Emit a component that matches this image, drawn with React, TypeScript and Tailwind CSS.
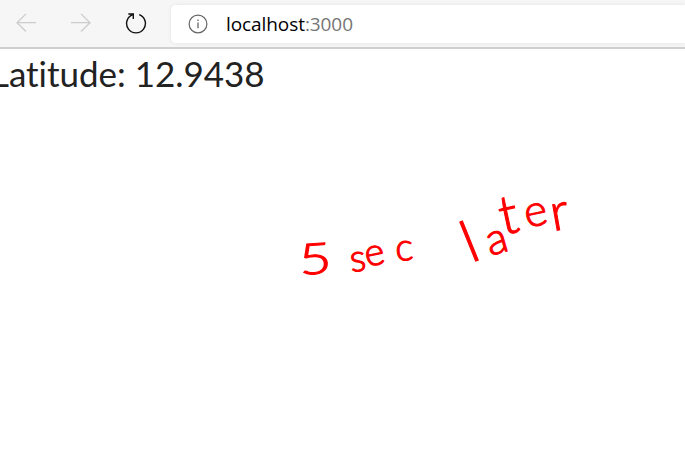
const ink = "fill-[#ff0000] stroke-[#ff0000] font-['Lato',sans-serif] font-light";

function Toolbar() {
  return (
    <header className="flex h-[49px] items-start border-b-2 border-[#cfcfcf] bg-[#f6f6f6]">
      <div className="flex w-[171px] shrink-0 items-start pt-[13px] pl-4">
        <svg className="h-5 w-5 shrink-0" viewBox="0 0 20 20" fill="none" stroke="#cccccc" strokeWidth="1.3">
          <path d="M20 9.7H1M10 .9L1 9.7L10 18.5" />
        </svg>
        <svg className="ml-[35px] h-5 w-5 shrink-0" viewBox="0 0 20 20" fill="none" stroke="#cccccc" strokeWidth="1.3">
          <path d="M0 9.7H19M10 .9L19 9.7L10 18.5" />
        </svg>
        <svg className="ml-[34px] h-[22px] w-[22px] shrink-0" viewBox="0 0 22 22" fill="none" stroke="#111111" strokeWidth="1.4">
          <path d="M14.2 1.6A9.4 9.4 0 1 1 7.8 1.6M3.3 1H8.3V6" />
        </svg>
      </div>
      <div className="mt-[5px] flex h-[38px] flex-1 items-center rounded-l-[5px] bg-white pl-[17px] shadow-[0_0_4px_rgba(0,0,0,0.08)]">
        <svg className="h-5 w-5 shrink-0" viewBox="0 0 20 20" fill="none" stroke="#666666">
          <circle cx="10" cy="10" r="8.9" strokeWidth="1.2" />
          <path d="M10 8.5V14.2M10 5.5V7" strokeWidth="1.3" />
        </svg>
        <span className="ml-[18px] font-['Open_Sans',sans-serif] text-[19px] leading-[26px] tracking-[-0.08px] text-black">
          localhost<span className="text-[#767676]">:3000</span>
        </span>
      </div>
    </header>
  );
}

function Annotation() {
  return (
    <svg className="block h-[353px] w-full" viewBox="0 100 685 353" strokeWidth="1.1">
      <text className={ink} fontSize="43" transform="translate(300 275) rotate(-4) scale(1.3 1)">
        5
      </text>
      <text className={ink} fontSize="38">
        <tspan x="351" y="272" rotate="-6">s</tspan>
        <tspan x="367" y="267" rotate="-12">e</tspan>
        <tspan x="396" y="261" rotate="-4">c</tspan>
      </text>
      <text className={ink} fontSize="44">
        <tspan x="471" y="263" rotate="-22" fontSize="58">l</tspan>
        <tspan x="490" y="256" rotate="-16">a</tspan>
        <tspan x="503" y="235" rotate="-12" fontSize="54">t</tspan>
        <tspan x="527" y="228" rotate="-12" fontSize="44">e</tspan>
        <tspan x="553" y="231" rotate="-10" fontSize="52">r</tspan>
      </text>
    </svg>
  );
}

export default function App() {
  return (
    <div className="h-[453px] w-full overflow-hidden bg-white">
      <Toolbar />
      <main>
        <h1 className="ml-[-9px] h-[51px] pt-[2px] font-['Lato',sans-serif] text-[35px] leading-[44px] font-normal tracking-[-0.03px] whitespace-nowrap text-[#222222] [font-variant-ligatures:none]">
          Latitude: 12.9438
        </h1>
        <Annotation />
      </main>
    </div>
  );
}
